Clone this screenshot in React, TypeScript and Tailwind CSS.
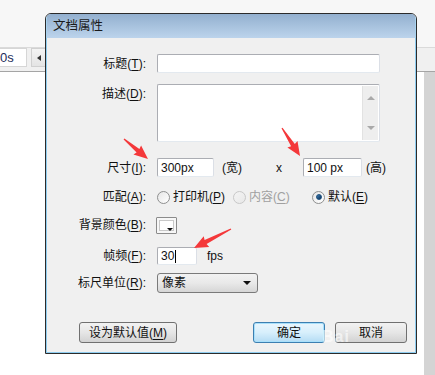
import React from "react";

function Key({ t, k, dim }: { t: string; k: string; dim?: boolean }) {
  return (
    <span className={dim ? "text-[#a0a0a0]" : ""}>
      {t}(<span className="underline underline-offset-2">{k}</span>)
    </span>
  );
}

function Label({ t, k }: { t: string; k: string }) {
  return (
    <div className="w-[100px] shrink-0 text-right pr-[1px]">
      <Key t={t} k={k} />:
    </div>
  );
}

function Radio({ on, dim }: { on?: boolean; dim?: boolean }) {
  return (
    <span
      className={
        "w-[13px] h-[13px] rounded-full border flex items-center justify-center shrink-0 bg-gradient-to-br " +
        (dim
          ? "border-[#c8c8c8] from-[#f4f4f4] to-[#e8e8e8]"
          : "border-[#8e8f8f] from-[#e6e6e6] to-[#ffffff]")
      }
    >
      {on && (
        <span className="w-[6px] h-[6px] rounded-full bg-gradient-to-br from-[#3d7fb6] to-[#0d2f55] border border-[#1b4e7c]" />
      )}
    </span>
  );
}

const inputCls =
  "bg-white border border-[#abadb3] border-b-[#e3e9ef] border-r-[#dbdfe6] rounded-[2px] flex items-center pl-[3px]";

const btnCls =
  "h-[21px] rounded-[3px] border flex items-center justify-center text-[12px]";

function arrow(x1: number, y1: number, x2: number, y2: number) {
  const dx = x2 - x1;
  const dy = y2 - y1;
  const len = Math.hypot(dx, dy);
  const ux = dx / len;
  const uy = dy / len;
  const nx = -uy;
  const ny = ux;
  const hb = len - 13;
  const p = (d: number, w: number) =>
    `${(x1 + ux * d + nx * w).toFixed(1)},${(y1 + uy * d + ny * w).toFixed(1)}`;
  return [p(0, 0.6), p(hb, 2.2), p(hb - 1, 6), p(len, 0), p(hb - 1, -6), p(hb, -2.2), p(0, -0.6)].join(" ");
}

export default function App() {
  return (
    <div className="relative w-[435px] h-[375px] overflow-hidden flex flex-col bg-white text-[12px] text-[#111] font-['Liberation_Sans','Noto_Sans_CJK_SC',sans-serif]">
      {/* background app */}
      <div className="h-[47px] bg-[#f7f7f7] shrink-0" />
      <div className="h-[25px] shrink-0 bg-[#f0f0f0] border-t border-[#dadada] border-b border-b-[#a5a5a5] flex items-start">
        <div className="w-[27px] h-[19px] bg-white border border-[#d6d6d6] border-l-0 flex items-center text-[13px] text-[#1d2d5c]">
          0s
        </div>
        <div className="ml-[4px] w-[16px] h-[19px] bg-gradient-to-b from-[#f4f4f4] to-[#e4e4e4] border border-[#d0d0d0] flex items-center justify-center">
          <span className="w-0 h-0 border-y-[3px] border-y-transparent border-r-[4px] border-r-[#333]" />
        </div>
      </div>
      <div className="flex-1 flex">
        <div className="flex-1 bg-white" />
        <div className="w-[11px] bg-[#d4d4d4]" />
      </div>

      {/* dialog window */}
      <div className="absolute left-[45px] top-[13px] w-[372px] h-[341px] border border-[#2b2b2b] rounded-t-[6px] overflow-hidden flex flex-col">
        <div className="h-[24px] shrink-0 bg-gradient-to-b from-[#93b0cf] to-[#bcd4ec] border-x border-[#a7d3f0] flex items-center pl-[6px] text-[12.5px] text-[#1a1a1a]">
          文档属性
        </div>
        <div className="flex-1 bg-[#f0f0f0] border-x border-b border-[#8fcdf0] flex flex-col">
          {/* title */}
          <div className="mt-[16px] flex items-center">
            <Label t="标题" k="T" />
            <div className={inputCls + " ml-[10px] w-[223px] h-[19px]"} />
          </div>
          {/* description */}
          <div className="mt-[11px] flex items-start">
            <div className="pt-[1px]">
              <Label t="描述" k="D" />
            </div>
            <div className={inputCls + " ml-[10px] w-[223px] h-[58px] items-stretch justify-end p-[1px]"}>
              <div className="w-[16px] bg-[#eeeeee] border-l border-[#e2e2e2] flex flex-col items-center justify-between py-[10px]">
                <span className="w-0 h-0 border-x-[4px] border-x-transparent border-b-[4px] border-b-[#a9a9a9]" />
                <span className="w-0 h-0 border-x-[4px] border-x-transparent border-t-[4px] border-t-[#a9a9a9]" />
              </div>
            </div>
          </div>
          {/* size */}
          <div className="mt-[16px] flex items-center">
            <Label t="尺寸" k="I" />
            <div className={inputCls + " ml-[10px] w-[57px] h-[19px] text-[12px]"}>300px</div>
            <span className="ml-[8px]">(宽)</span>
            <span className="ml-[34px]">x</span>
            <div className={inputCls + " ml-[21px] w-[59px] h-[19px] text-[12px]"}>100 px</div>
            <span className="ml-[4px]">(高)</span>
          </div>
          {/* match */}
          <div className="mt-[12px] h-[16px] flex items-center">
            <Label t="匹配" k="A" />
            <div className="ml-[10px] w-[76px] flex items-center gap-[3px]">
              <Radio />
              <Key t="打印机" k="P" />
            </div>
            <div className="w-[79px] flex items-center gap-[3px]">
              <Radio dim />
              <Key t="内容" k="C" dim />
            </div>
            <div className="flex items-center gap-[3px]">
              <Radio on />
              <Key t="默认" k="E" />
            </div>
          </div>
          {/* background colour */}
          <div className="mt-[12px] h-[16px] flex items-center">
            <Label t="背景颜色" k="B" />
            <div className="ml-[9px] w-[21px] h-[17px] bg-[#f7f7f7] border border-[#8b8b8b] rounded-[1px] relative p-[2px]">
              <div className="w-full h-full bg-white border border-[#c8c8c8]" />
              <span className="absolute right-[3px] bottom-[2px] w-0 h-0 border-x-[3px] border-x-transparent border-t-[3px] border-t-[#111]" />
            </div>
          </div>
          {/* frame rate */}
          <div className="mt-[14px] flex items-center">
            <Label t="帧频" k="F" />
            <div className={inputCls + " ml-[10px] w-[40px] h-[18px] text-[12px] border-[#7eb4ea] border-b-[#b7d9f5] border-r-[#b7d9f5]"}>
              30<span className="ml-[1px] w-[1px] h-[13px] bg-black" />
            </div>
            <span className="ml-[10px]">fps</span>
          </div>
          {/* ruler unit */}
          <div className="mt-[8px] flex items-center">
            <Label t="标尺单位" k="R" />
            <div className="ml-[10px] w-[101px] h-[20px] rounded-[3px] border border-[#7a7a7a] bg-gradient-to-b from-[#f2f2f2] via-[#e9e9e9] to-[#d6d6d6] flex items-center justify-between pl-[4px] pr-[6px]">
              <span>像素</span>
              <span className="w-0 h-0 border-x-[4px] border-x-transparent border-t-[4px] border-t-[#111]" />
            </div>
          </div>
          {/* buttons */}
          <div className="mt-[29px] flex items-center pr-[8px]">
            <div className={btnCls + " ml-[32px] w-[98px] border-[#707070] bg-gradient-to-b from-[#f2f2f2] via-[#e6e6e6] to-[#d2d2d2]"}>
              <Key t="设为默认值" k="M" />
            </div>
            <div className={btnCls + " ml-auto w-[72px] border-[#3c7fb1] bg-gradient-to-b from-[#eaf6fd] via-[#d7effc] to-[#b4dcf4] shadow-[inset_0_0_0_1px_#a8e0fb]"}>
              确定
            </div>
            <div className={btnCls + " ml-[10px] w-[72px] border-[#707070] bg-gradient-to-b from-[#f2f2f2] via-[#e6e6e6] to-[#d2d2d2] relative"}>
              取消
              <span className="absolute left-[-14px] top-[6px] text-[16px] leading-none font-bold text-white/60 tracking-[1px]">
                Bai
              </span>
            </div>
          </div>
        </div>
      </div>

      {/* annotation arrows */}
      <svg className="absolute inset-0 pointer-events-none" width="435" height="375">
        <polygon points={arrow(124, 139, 148, 159)} fill="#f4383a" />
        <polygon points={arrow(282, 128, 300, 156)} fill="#f4383a" />
        <polygon points={arrow(231, 229, 194, 248)} fill="#f4383a" />
      </svg>
    </div>
  );
}
